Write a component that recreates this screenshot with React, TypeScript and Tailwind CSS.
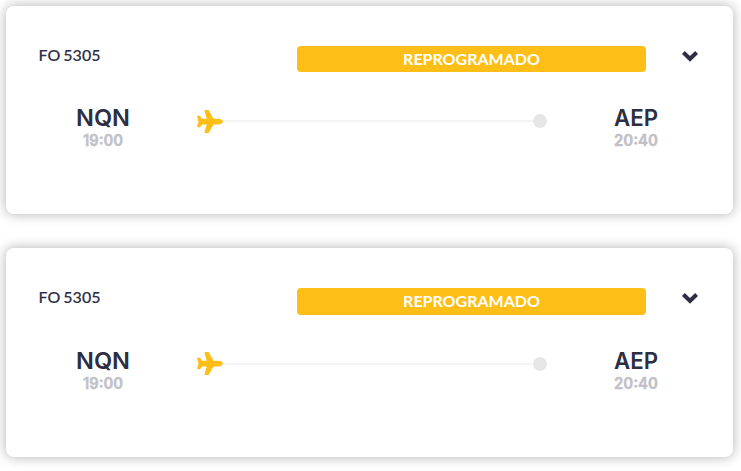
import { FaPlane } from "react-icons/fa";

type Stop = { code: string; time: string };

const fitted = "spacingAndGlyphs";

function Airport({ code, time, codeWidth, timeWidth }: Stop & { codeWidth: number; timeWidth: number }) {
  return (
    <svg width="60" height="46" className="block shrink-0 overflow-visible font-['Inter',sans-serif]">
      <text x="30" y="17.8" textAnchor="middle" textLength={codeWidth} lengthAdjust={fitted} className="fill-[#2d2e43] text-[23.5px] font-semibold">
        {code}
      </text>
      <text x="30" y="37.6" textAnchor="middle" textLength={timeWidth} lengthAdjust={fitted} className="fill-[#c1c1c7] stroke-[#c1c1c7] stroke-[0.3px] text-[15.5px] font-bold">
        {time}
      </text>
    </svg>
  );
}

function FlightCard({ flight, status, from, to }: { flight: string; status: string; from: Stop; to: Stop }) {
  return (
    <section className="h-[208.6px] w-[727px] rounded-[8px] bg-white pt-10 shadow-[0_0_12px_1px_rgba(0,0,0,0.27)]">
      <header className="flex h-[26.4px] items-center pl-[32.5px]">
        <span className="relative -top-[4px] w-[258.5px] text-[16px] leading-5 font-medium text-[#2d2e43] [-webkit-text-stroke:0.15px_#2d2e43] [word-spacing:-1px]">{flight}</span>
        <span className="flex h-[26.4px] w-[349px] items-center justify-center rounded-[4px] bg-[#fdbf17] text-[16px] font-bold text-white">
          {status}
        </span>
        <svg width="16" height="11" viewBox="0 0 16 11" className="relative -top-[2.4px] ml-9">
          <path d="M2.8 0L8 5L13.2 0L16 2.9L8 10.8L0 2.9Z" fill="#2d2e43" />
        </svg>
      </header>
      <div className="mt-[36.1px] flex h-[46px] pl-[67px]">
        <Airport {...from} codeWidth={54} timeWidth={40} />
        <div className="mt-[1px] ml-[64px] flex h-6 w-[350px] items-center">
          <FaPlane className="h-[23px] w-[26px] shrink-0 text-[#fdbf17]" />
          <div className="h-[2px] grow bg-[#f4f4f4]" />
          <div className="size-[14px] shrink-0 rounded-full bg-[#e6e6e6]" />
        </div>
        <div className="ml-[59px]">
          <Airport {...to} codeWidth={44} timeWidth={44} />
        </div>
      </div>
    </section>
  );
}

const flights = [
  { flight: "FO 5305", status: "REPROGRAMADO", from: { code: "NQN", time: "19:00" }, to: { code: "AEP", time: "20:40" } },
  { flight: "FO 5305", status: "REPROGRAMADO", from: { code: "NQN", time: "19:00" }, to: { code: "AEP", time: "20:40" } },
];

export default function App() {
  return (
    <main className="flex h-[471px] w-[741px] flex-col gap-[33.8px] overflow-hidden bg-white pl-[6px] pt-[5.8px] font-['Lato',sans-serif]">
      {flights.map((item, index) => (
        <FlightCard key={index} {...item} />
      ))}
    </main>
  );
}
